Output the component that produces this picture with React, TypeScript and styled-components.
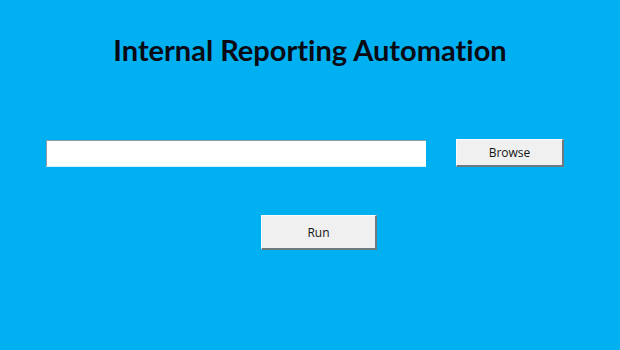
import React from "react";
import styled, { createGlobalStyle } from "styled-components";

const Global = createGlobalStyle`
  html, body { margin: 0; padding: 0; }
  body { background: #00b0f0; }
`;

const Page = styled.div`
  width: 620px;
  height: 350px;
  background: #00b0f0;
  display: flex;
  flex-direction: column;
  box-sizing: border-box;
  padding-top: 32px;
`;

const Title = styled.h1`
  margin: 0;
  text-align: center;
  font-family: "Lato", "Open Sans", sans-serif;
  font-weight: 700;
  font-size: 29px;
  line-height: 35px;
  font-variant-ligatures: none;
  color: #0a0a14;
`;

const Row = styled.div`
  display: flex;
  align-items: flex-start;
  gap: 30px;
  margin-top: 72px;
  padding-left: 46px;
`;

const PathInput = styled.input`
  box-sizing: border-box;
  width: 380px;
  height: 27px;
  margin-top: 1px;
  background: #ffffff;
  border-style: solid;
  border-width: 1px 0 1px 1px;
  border-color: #8c9aa3 transparent #d8f2fb #8c9aa3;
  outline: none;
  padding: 0 4px;
`;

const Button = styled.button<{ $w: number; $h?: number }>`
  box-sizing: border-box;
  width: ${(p) => p.$w}px;
  height: ${(p) => p.$h ?? 28}px;
  background: #f0f0f0;
  border-style: solid;
  border-width: 1px 2px 2px 1px;
  border-color: #fbfbfb #6f7a80 #6f7a80 #fbfbfb;
  font-family: "Open Sans", "Noto Sans", sans-serif;
  font-size: 12px;
  color: #141414;
  padding: 0;
  display: flex;
  align-items: center;
  justify-content: center;
`;

const RunRow = styled.div`
  display: flex;
  margin-top: 48px;
  padding-left: 261px;
`;

export default function App() {
  return (
    <Page>
      <Global />
      <Title>Internal Reporting Automation</Title>
      <Row>
        <PathInput type="text" />
        <Button $w={108}>Browse</Button>
      </Row>
      <RunRow>
        <Button $w={116} $h={35}>Run</Button>
      </RunRow>
    </Page>
  );
}
